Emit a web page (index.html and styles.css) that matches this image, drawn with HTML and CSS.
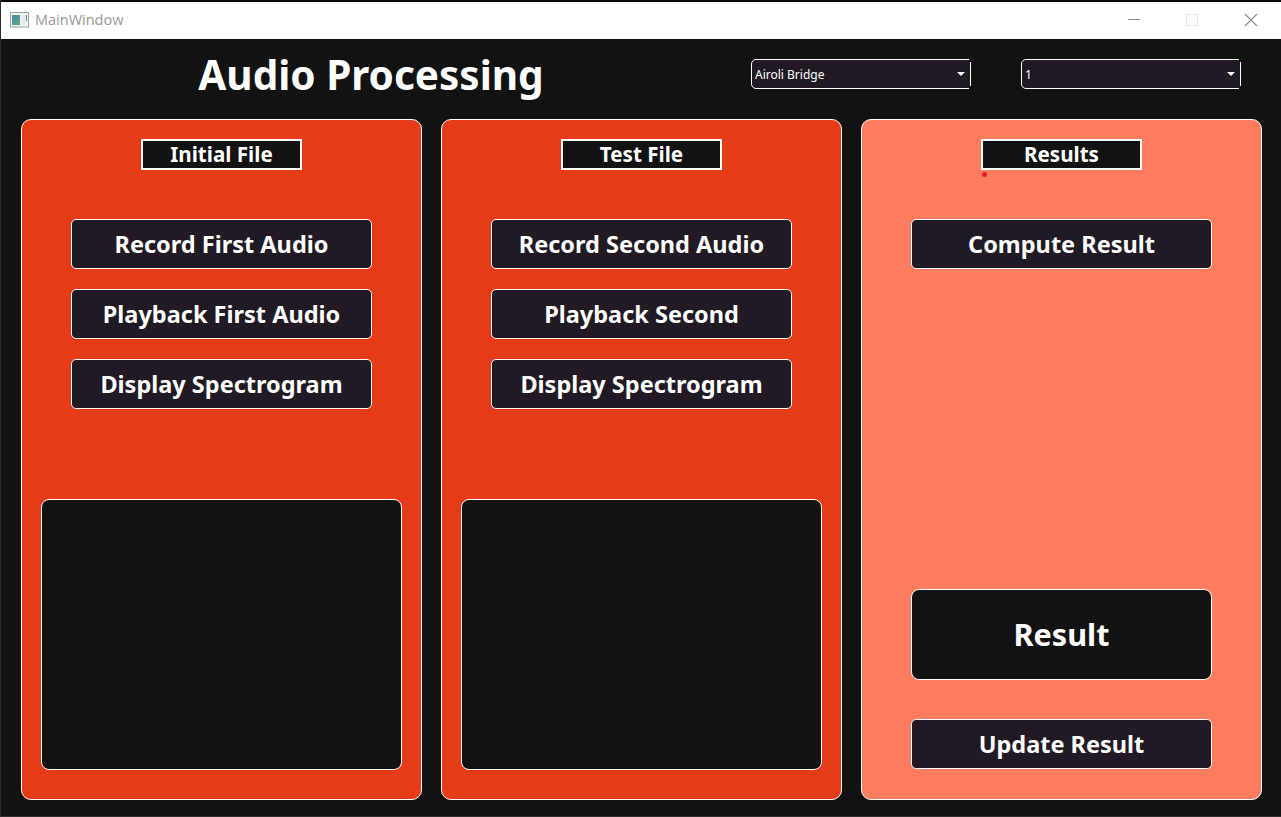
FILE: index.html
```html
<!DOCTYPE html>
<html lang="en">
<head>
<meta charset="utf-8">
<title>MainWindow</title>
<link rel="stylesheet" href="styles.css">
</head>
<body>
<div class="window">
  <header class="titlebar">
    <svg class="app-icon" width="19" height="16" viewBox="0 0 19 16">
      <defs><linearGradient id="g" x1="0" y1="0" x2="1" y2="1"><stop offset="0" stop-color="#4688a8"/><stop offset="1" stop-color="#58ac78"/></linearGradient></defs>
      <rect x=".5" y=".5" width="18" height="14.5" fill="#f4f4f5" stroke="#9ba0a8"/>
      <rect x="2" y="3" width="8" height="10" fill="url(#g)"/>
      <rect x="11" y="3" width="5" height="10" fill="#e9e9ec"/>
      <path d="M16 3h1v6h-1z" fill="#52a287"/>
    </svg>
    <span class="window-name">MainWindow</span>
    <svg class="controls" width="130" height="12" viewBox="0 0 130 12" fill="none">
      <path d="M0 5.5h12" stroke="#8e8e8e"/>
      <rect x="58.500" y=".5" width="11" height="11" stroke="#e8e8e8"/>
      <path d="M117 0l12 12M129 0l-12 12" stroke="#858585" stroke-width="1.1"/>
    </svg>
  </header>
  <div class="toolbar">
    <h1 class="title">Audio Processing</h1>
    <div class="combo"><span>Airoli Bridge</span><i class="drop"></i></div>
    <div class="combo"><span>1</span><i class="drop"></i></div>
  </div>
  <main class="panels">
    <section class="panel">
      <h2 class="tag">Initial File</h2>
      <div class="actions">
        <button class="btn">Record First Audio</button>
        <button class="btn">Playback First Audio</button>
        <button class="btn">Display Spectrogram</button>
      </div>
      <div class="plot"></div>
    </section>
    <section class="panel">
      <h2 class="tag">Test File</h2>
      <div class="actions">
        <button class="btn">Record Second Audio</button>
        <button class="btn">Playback Second</button>
        <button class="btn">Display Spectrogram</button>
      </div>
      <div class="plot"></div>
    </section>
    <section class="panel results">
      <h2 class="tag">Results<i class="dot"></i></h2>
      <div class="actions">
        <button class="btn">Compute Result</button>
      </div>
      <div class="outcome">Result</div>
      <button class="btn">Update Result</button>
    </section>
  </main>
</div>
</body>
</html>
```
FILE: styles.css
```css
* { box-sizing: border-box; }
body { margin: 0; background: #121212; overflow: hidden; }
.window {
  width: 1281px;
  height: 817px;
  display: flex;
  flex-direction: column;
  background: #121212;
  border-left: 1px solid #2b2b2b;
  border-bottom: 1px solid #303030;
  color: #fff;
  font-family: "Noto Sans", "Open Sans", sans-serif;
}
.titlebar {
  height: 39px;
  flex: none;
  display: flex;
  align-items: center;
  padding: 0 23px 1px 9px;
  background: #fff;
  border-top: 2px solid #0a0709;
}
.window-name {
  margin-left: 6px;
  padding-bottom: 1px;
  color: #999;
  font: 14.5px/20px "Open Sans", sans-serif;
}
.controls { margin-left: auto; }
.toolbar {
  height: 80px;
  flex: none;
  display: flex;
  align-items: flex-start;
  padding: 20px 40px 0 0;
}
.title {
  width: 740px;
  margin: -10px 10px 0 0;
  text-align: center;
  font-size: 40.5px;
  line-height: 52px;
  font-weight: 700;
}
.combo {
  position: relative;
  width: 220px;
  height: 30px;
  display: flex;
  align-items: center;
  justify-content: space-between;
  padding: 0 5px 0 3px;
  background: #211a24;
  border: 1px solid #fff;
  border-radius: 5px 0 0 5px;
  font-size: 12px;
}
/* Notched corners beside the drop-down button */
.combo::before,
.combo::after {
  content: "";
  position: absolute;
  right: -1px;
  width: 2px;
  height: 3px;
  background: #121212;
}
.combo::before { top: -1px; }
.combo::after { bottom: -1px; }
.combo + .combo { margin-left: 50px; }
.drop {
  border: 4px solid transparent;
  border-top-color: #fff;
  border-bottom: 0;
}
.panels { display: flex; gap: 19px; padding-left: 20px; }
.panel {
  width: 401px;
  height: 681px;
  display: flex;
  flex-direction: column;
  align-items: center;
  padding: 19px 0 29px;
  background: #e53b17;
  border: 1px solid #fff;
  border-radius: 10px;
}
.results { padding-bottom: 30px; background: #ff7c5f; }
.tag {
  position: relative;
  width: 161px;
  height: 31px;
  margin: 0 0 49px;
  background: #121212;
  border: 2px solid #fff;
  text-align: center;
  font-size: 20.6px;
  line-height: 27px;
  font-weight: 700;
}
.dot {
  position: absolute;
  left: -1.500px;
  top: 30.500px;
  width: 5px;
  height: 5px;
  border-radius: 50%;
  background: #e81c24;
}
.actions { display: flex; flex-direction: column; gap: 20px; }
.btn {
  flex: none;
  width: 301px;
  height: 50px;
  padding: 0;
  background: #211a24;
  border: 1px solid #fff;
  border-radius: 5px;
  color: #fff;
  font: 700 23.5px/46px "Noto Sans", sans-serif;
}
.plot {
  width: 361px;
  height: 271px;
  margin-top: auto;
  background: #121212;
  border: 1px solid #fff;
  border-radius: 8px;
}
.outcome {
  width: 301px;
  height: 91px;
  margin: auto 0 39px;
  background: #121212;
  border: 1px solid #fff;
  border-radius: 8px;
  text-align: center;
  font-size: 30.6px;
  line-height: 89px;
  font-weight: 700;
}
```
